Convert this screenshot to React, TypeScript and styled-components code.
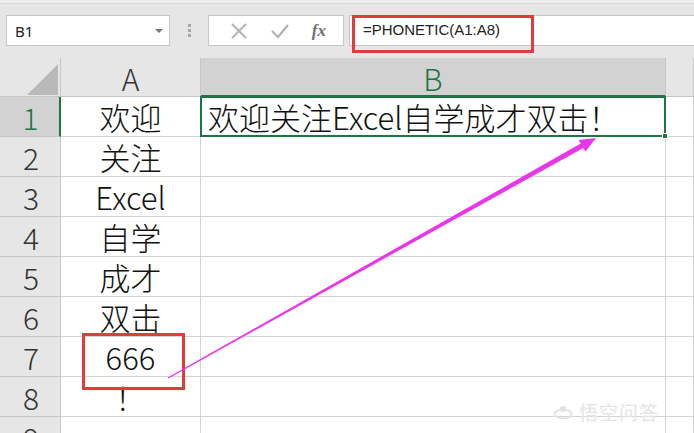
import styled, { createGlobalStyle } from "styled-components";

const GlobalStyle = createGlobalStyle`
	* { box-sizing: border-box; }
	body {
		margin: 0;
		overflow: hidden;
		background: #ffffff;
	}
`;

const COLUMN_A = ["欢迎", "关注", "Excel", "自学", "成才", "双击", "666", "！", ""];
const RESULT = "欢迎关注Excel自学成才双击！";

export default function App() {
	return (
		<Page>
			<GlobalStyle />
			<Toolbar>
				<NameBox>
					<span>B1</span>
					<DropArrow />
				</NameBox>
				<Grip>
					<i />
					<i />
					<i />
				</Grip>
				<FxBox>
					<svg width="18" height="18" viewBox="0 0 18 18">
						<path d="M2 2 L16 16 M16 2 L2 16" stroke="#b4b4b4" strokeWidth="2" fill="none" />
					</svg>
					<svg width="20" height="18" viewBox="0 0 20 18">
						<path d="M2 9 L8 15 L18 3" stroke="#b4b4b4" strokeWidth="2.2" fill="none" />
					</svg>
					<FxLabel>fx</FxLabel>
				</FxBox>
				<FormulaInput>=PHONETIC(A1:A8)</FormulaInput>
			</Toolbar>

			<Sheet>
				<Corner>
					<svg width="61" height="39" viewBox="0 0 61 39">
						<polygon points="27,37 58,37 58,6" fill="#b9b9b9" />
					</svg>
				</Corner>
				<ColHeader>A</ColHeader>
				<ColHeader $active>B</ColHeader>
				<ColHeader />

				{COLUMN_A.map((text, i) => (
					<Row key={i}>
						<RowHeader $active={i === 0}>{i + 1}</RowHeader>
						<CellA>{text}</CellA>
						{i === 0 ? (
							<SelectedCell>
								{RESULT}
								<Handle />
							</SelectedCell>
						) : (
							<Cell />
						)}
						<Cell />
					</Row>
				))}
			</Sheet>

			<FormulaMark />
			<ValueMark />

			<Arrow width="694" height="433" viewBox="0 0 694 433">
				<polygon
					points="168.3,378.5 583.3,148 585.5,151.6 596,138 578.6,140.1 580.8,143.6 167.7,377.5"
					fill="#e936ea"
				/>
			</Arrow>

			<Watermark>
				<svg width="20" height="14" viewBox="0 0 20 14">
					<ellipse cx="10" cy="9" rx="8.5" ry="4.5" fill="none" stroke="#e2e2e2" strokeWidth="2" />
					<circle cx="10" cy="4" r="3" fill="#e2e2e2" />
				</svg>
				<span>悟空问答</span>
			</Watermark>
		</Page>
	);
}

const Page = styled.div`
	position: relative;
	width: 694px;
	height: 433px;
	overflow: hidden;
	background: #ffffff;
`;

const Toolbar = styled.div`
	display: flex;
	align-items: flex-start;
	height: 58px;
	padding: 12px 0 0 6px;
	background: #e6e6e6;
	border-top: 3px solid #ededed;
	box-shadow: inset 0 1px 0 #d8d8d8;
	font-family: "Noto Sans", "Liberation Sans", sans-serif;
`;

const NameBox = styled.div`
	display: flex;
	align-items: center;
	justify-content: space-between;
	width: 164px;
	height: 31px;
	padding: 0 6px 0 8px;
	background: #ffffff;
	border: 1px solid #c6c6c6;
	font-size: 15px;
	color: #222;
`;

const DropArrow = styled.span`
	width: 0;
	height: 0;
	border-left: 4px solid transparent;
	border-right: 4px solid transparent;
	border-top: 4px solid #777;
`;

const Grip = styled.div`
	display: flex;
	flex-direction: column;
	gap: 2px;
	width: 38px;
	height: 31px;
	align-items: center;
	justify-content: center;

	i {
		display: block;
		width: 3px;
		height: 3px;
		background: #a8a8a8;
	}
`;

const FxBox = styled.div`
	display: flex;
	align-items: center;
	justify-content: space-around;
	width: 136px;
	height: 31px;
	padding: 0 6px 0 10px;
	background: #ffffff;
	border: 1px solid #c6c6c6;
`;

const FxLabel = styled.span`
	font-family: "Liberation Serif", serif;
	font-style: italic;
	font-weight: bold;
	font-size: 17px;
	color: #707070;
`;

const FormulaInput = styled.div`
	flex: 1;
	height: 31px;
	margin-left: 5px;
	padding: 5px 0 0 13px;
	background: #ffffff;
	border: 1px solid #c6c6c6;
	border-right: none;
	font-family: "Liberation Sans", sans-serif;
	font-size: 15px;
	color: #222;
`;

const Sheet = styled.div`
	display: grid;
	grid-template-columns: 61px 140px 465px 1fr;
	grid-template-rows: 39px;
	grid-auto-rows: 40px;
	font-family: "Noto Sans CJK SC", "Noto Sans", sans-serif;
	font-weight: 300;
	line-height: 1;
`;

const Row = styled.div`
	display: contents;
`;

const Corner = styled.div`
	background: #e6e6e6;
	border-right: 1px solid #c6c6c6;
	border-bottom: 1px solid #c6c6c6;
	line-height: 0;
`;

const ColHeader = styled.div<{ $active?: boolean }>`
	display: flex;
	align-items: center;
	justify-content: center;
	padding-top: 2px;
	background: ${(p) => (p.$active ? "#d2d2d2" : "#e6e6e6")};
	border-right: 1px solid #c6c6c6;
	border-bottom: ${(p) => (p.$active ? "2px solid #217346" : "1px solid #c6c6c6")};
	font-size: 30px;
	color: ${(p) => (p.$active ? "#217346" : "#333")};
`;

const RowHeader = styled.div<{ $active?: boolean }>`
	display: flex;
	align-items: center;
	justify-content: center;
	padding-left: 2px;
	background: ${(p) => (p.$active ? "#d2d2d2" : "#e6e6e6")};
	border-right: ${(p) => (p.$active ? "2px solid #217346" : "1px solid #c6c6c6")};
	border-bottom: 1px solid #c6c6c6;
	font-size: 30px;
	color: ${(p) => (p.$active ? "#217346" : "#333")};
`;

const Cell = styled.div`
	border-right: 1px solid #d4d4d4;
	border-bottom: 1px solid #d4d4d4;
`;

const CellA = styled(Cell)`
	display: flex;
	align-items: center;
	justify-content: center;
	font-size: 31px;
	color: #111;
	white-space: nowrap;
`;

const SelectedCell = styled.div`
	position: relative;
	display: flex;
	align-items: center;
	margin: -1px 0 0 -1px;
	padding-left: 6px;
	border: 2px solid #217346;
	font-size: 31px;
	color: #111;
	white-space: nowrap;
`;

const Handle = styled.span`
	position: absolute;
	right: -4px;
	bottom: -4px;
	width: 6px;
	height: 6px;
	background: #217346;
	border: 1px solid #ffffff;
`;

const FormulaMark = styled.div`
	position: absolute;
	left: 352px;
	top: 15px;
	width: 182px;
	height: 38px;
	border: 3px solid #e53a3a;
`;

const ValueMark = styled.div`
	position: absolute;
	left: 82px;
	top: 333px;
	width: 103px;
	height: 57px;
	border: 3px solid #e53a3a;
`;

const Arrow = styled.svg`
	position: absolute;
	left: 0;
	top: 0;
	pointer-events: none;
`;

const Watermark = styled.div`
	position: absolute;
	left: 553px;
	top: 398px;
	display: flex;
	align-items: center;
	gap: 6px;
	font-family: "Noto Sans CJK SC", sans-serif;
	font-size: 19px;
	color: #e4e4e4;
	text-shadow: 0 0 1px #ffffff;
	letter-spacing: 1px;
`;
